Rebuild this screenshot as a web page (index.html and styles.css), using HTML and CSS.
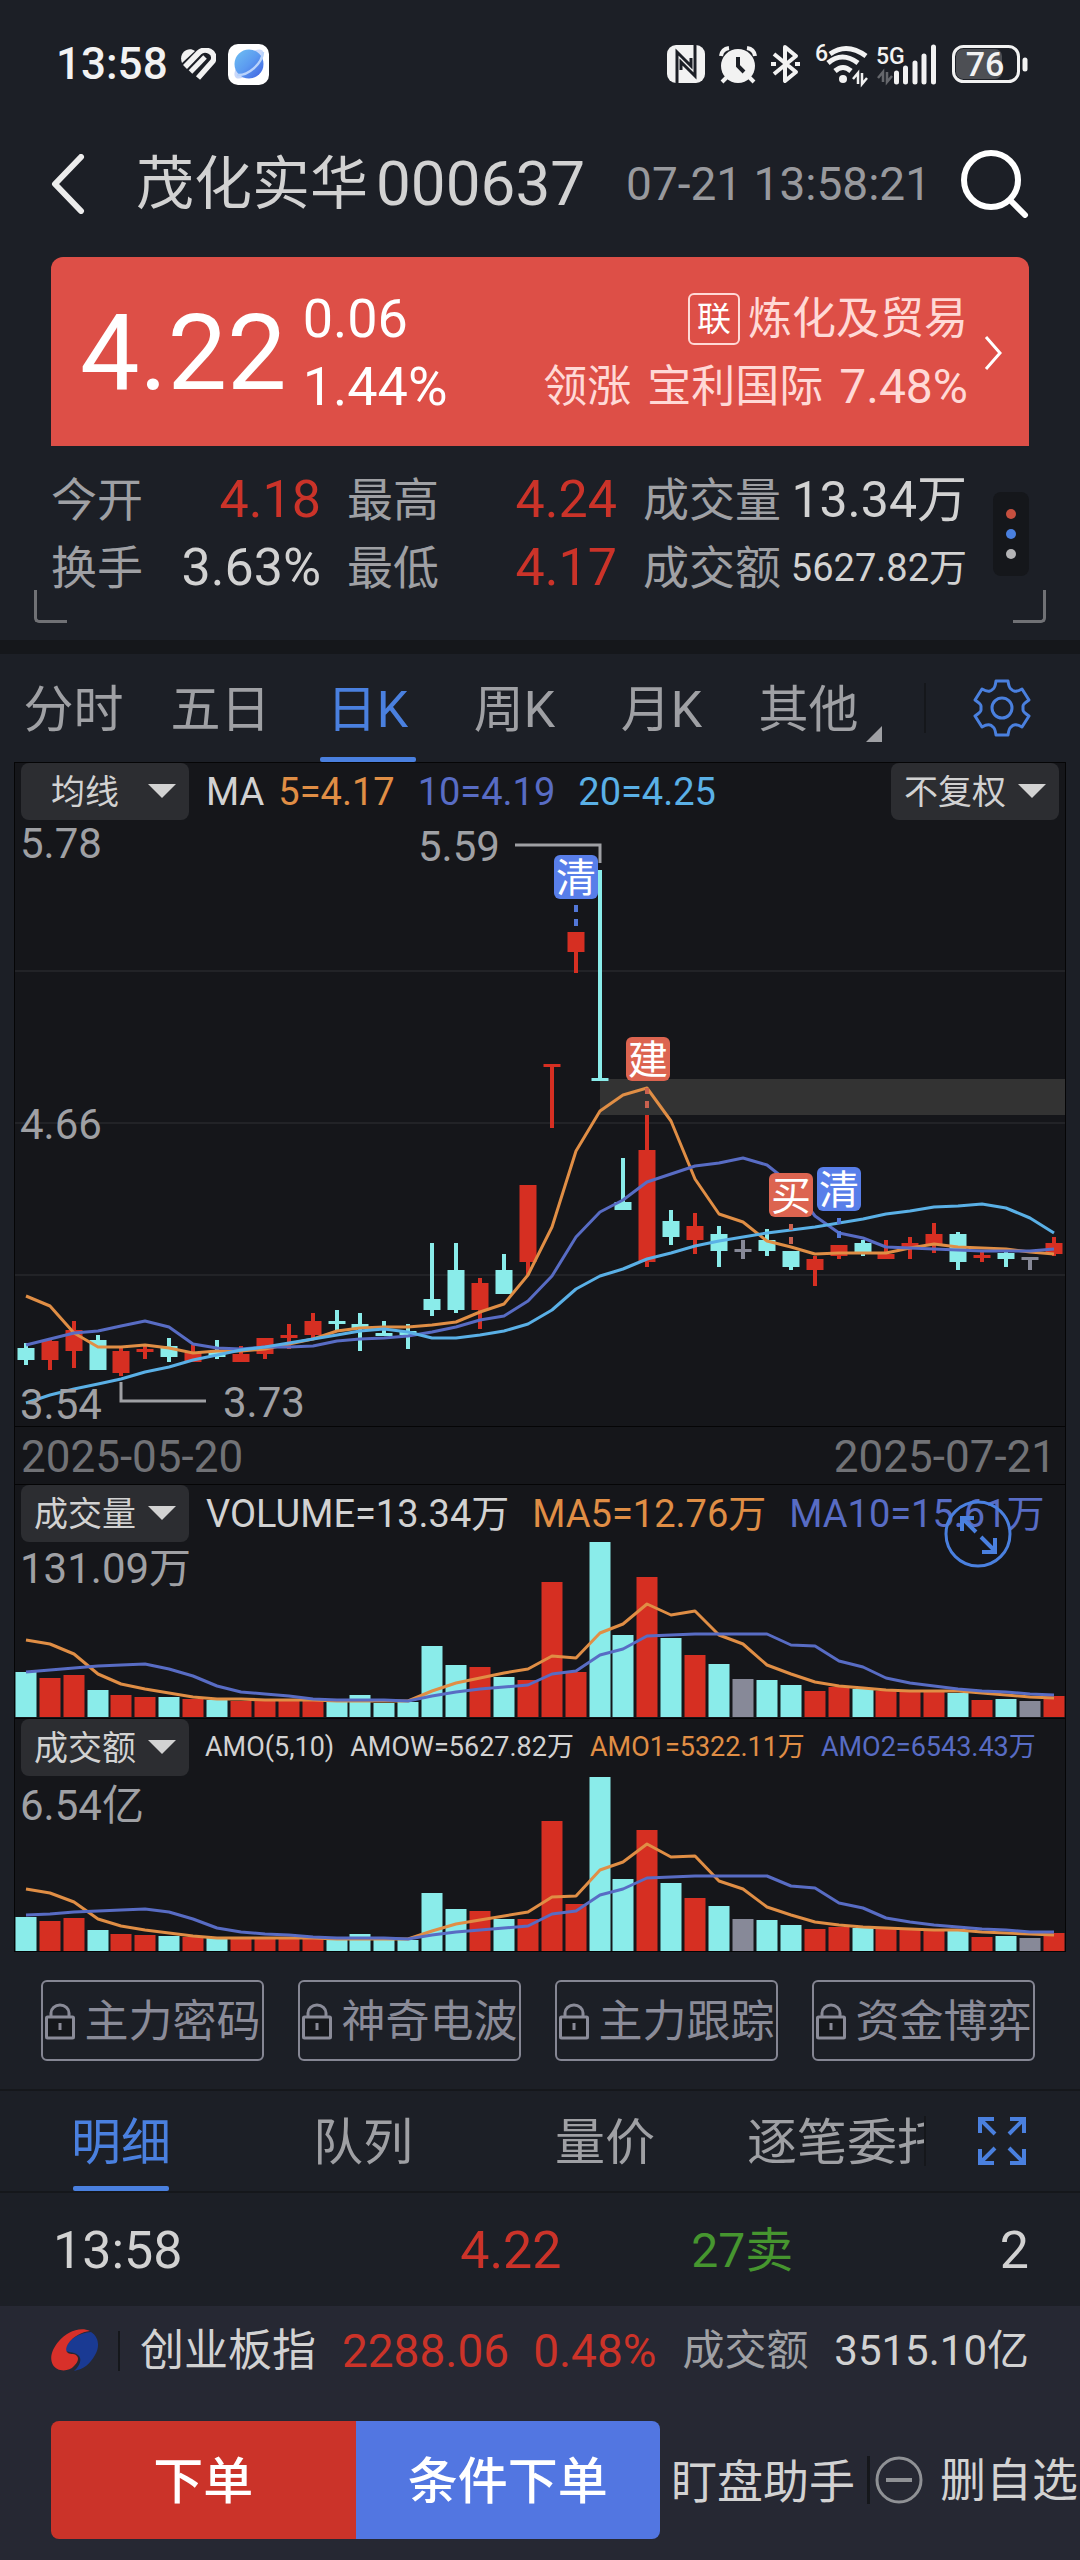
FILE: index.html
```html
<!DOCTYPE html>
<html lang="zh-CN">
<head>
<meta charset="utf-8">
<meta name="viewport" content="width=device-width, initial-scale=1">
<title>茂化实华 000637</title>
<link rel="stylesheet" href="styles.css">
</head>
<body>
<div class="status">
  <div class="status-side">
    <span class="status-time">13:58</span>
    <svg width="36" height="32" viewBox="0 0 36 32" fill="none" stroke="#f2f2f2" stroke-linecap="butt" aria-hidden="true">
      <path d="M2 15C-2 5 8-2 15 3z" fill="#f2f2f2" stroke="none"/>
      <path d="M5 19L19 4.500C25-1 37 4 33 13L18 30" stroke-width="5.500"/>
      <path d="M10.500 24L25 9" stroke-width="5"/>
    </svg>
    <svg width="41" height="41" viewBox="0 0 41 41" aria-hidden="true">
      <defs><linearGradient id="planet" x1="0" y1="0" x2="1" y2="1"><stop offset="0" stop-color="#6fc0f2"/><stop offset=".5" stop-color="#5b9af0"/><stop offset="1" stop-color="#3f5fe0"/></linearGradient></defs>
      <rect width="41" height="41" rx="10" fill="#fff"/>
      <ellipse cx="21" cy="20" rx="19" ry="8" transform="rotate(-45 21 20)" fill="#c9d8fa"/>
      <circle cx="21" cy="20" r="14.500" fill="url(#planet)"/>
      <path d="M9 31C20 32 34 20 35 8" fill="none" stroke="#b9d3fb" stroke-width="2.500"/>
    </svg>
  </div>
  <div class="status-side status-icons">
    <svg width="38" height="38" viewBox="0 0 38 38" aria-hidden="true"><rect width="38" height="38" rx="9" fill="#f2f2f2"/><path d="M10 38V7L24 21V13M28 0V31L14 17V25" fill="none" stroke="#1c1f26" stroke-width="3"/></svg>
    <svg width="38" height="38" viewBox="0 0 38 38" fill="none" stroke="#f2f2f2" aria-hidden="true"><circle cx="19" cy="21" r="17" fill="#f2f2f2" stroke="none"/><path d="M2 11Q3 4 10 3M28 3q7 1 8 8M8 32l-5 5M30 32l5 5" stroke-width="4"/><path d="M19 12v9l6 6" stroke="#1c1f26" stroke-width="4"/></svg>
    <svg width="30" height="38" viewBox="0 0 30 38" fill="none" stroke="#f2f2f2" stroke-width="4" stroke-linejoin="round" aria-hidden="true"><path d="M3 9l22 18-11 9V2l11 9L3 29M0 19h5M24 19h5"/></svg>
    <svg class="wifi" width="54" height="42" viewBox="0 0 54 42" fill="none" stroke="#f2f2f2" stroke-width="5" aria-hidden="true"><path d="M15 11q17-12 36 2M13 20q14-12 30 0M20 28q8-7 16 0"/><circle cx="28" cy="36" r="4" fill="#f2f2f2" stroke="none"/><path d="M43 41V30l-5 6M47 30v11l5-6" stroke-width="2.500"/><text class="tiny-text" x="0" y="18">6</text></svg>
    <svg width="62" height="40" viewBox="0 0 62 40" aria-hidden="true"><path d="M7 38V28l-5 6M11 28v10l5-6" fill="none" stroke="#65676c" stroke-width="2.500"/><path d="M20.500 38V29M29.500 38V24M39 38V19M48 38V12M57.500 38V3" stroke="#f2f2f2" stroke-width="5" stroke-linecap="round"/><text class="tiny-text" x="0" y="20">5G</text></svg>
    <svg width="76" height="38" viewBox="0 0 76 38" aria-hidden="true"><rect x="4" y="4" width="46" height="30" rx="7" fill="#4d4f54"/><rect x="1.500" y="1.500" width="65" height="35" rx="10" fill="none" stroke="#f2f2f2" stroke-width="3"/><path d="M73 15v9" stroke="#f2f2f2" stroke-width="5" stroke-linecap="round"/><text class="battery-text" x="33" y="31">76</text></svg>
  </div>
</div>

<header class="header">
  <button class="icon-button" type="button" aria-label="返回"><svg width="34" height="60" viewBox="0 0 34 60"><path d="M30 3L4 30l26 27" fill="none" stroke="#ececec" stroke-width="6" stroke-linecap="round" stroke-linejoin="round"/></svg></button>
  <h1 class="title"><span>茂化实华</span><span class="code">000637</span></h1>
  <time class="stamp">07-21 13:58:21</time>
  <button class="icon-button" type="button" aria-label="搜索"><svg width="68" height="68" viewBox="0 0 68 68"><circle cx="30" cy="30" r="27" fill="none" stroke="#fff" stroke-width="6"/><path d="M50 51l14 14" stroke="#fff" stroke-width="6" stroke-linecap="round"/></svg></button>
</header>

<main>
<section class="quote">
  <a class="price-card" href="#sector">
    <strong class="price">4.22</strong>
    <span class="change"><span>0.06</span><span>1.44%</span></span>
    <span class="sector">
      <span class="sector-line"><span class="badge">联</span>炼化及贸易</span>
      <span class="sector-line leader"><span>领涨</span><span>宝利国际</span><span class="leader-pct">7.48%</span></span>
    </span>
    <svg width="19" height="36" viewBox="0 0 19 36" aria-hidden="true"><path d="M2 2l14 16L2 34" fill="none" stroke="#fff" stroke-width="3"/></svg>
  </a>
  <div class="stats">
    <div class="stat"><span>今开</span><b class="up">4.18</b></div>
    <div class="stat"><span>最高</span><b class="up">4.24</b></div>
    <div class="stat"><span>成交量</span><b class="volume">13.34万</b></div>
    <button class="dots" type="button" aria-label="更多"><i></i><i></i><i></i></button>
    <div class="stat"><span>换手</span><b>3.63%</b></div>
    <div class="stat"><span>最低</span><b class="up">4.17</b></div>
    <div class="stat"><span>成交额</span><b class="small">5627.82万</b></div>
  </div>
</section>

<nav class="tabs period-tabs">
  <div class="tab-list">
    <button type="button">分时</button>
    <button type="button">五日</button>
    <button type="button" class="active">日K</button>
    <button type="button">周K</button>
    <button type="button">月K</button>
    <button type="button" class="more">其他</button>
  </div>
  <button class="tab-tool" type="button" aria-label="设置"><svg width="58" height="58" viewBox="-29 -29 58 58" fill="none" stroke="#4a80df" stroke-width="3" stroke-linejoin="round"><path d="M-9-19Q-7-20-6-27H6Q7-20 9-19Q11-17 12-17Q15-16 20-19L27-8Q21-4 21-2V2Q21 4 27 8L20 19Q15 16 12 17Q11 17 9 19Q7 20 6 27H-6Q-7 20-9 19Q-11 17-12 17Q-15 16-20 19L-27 8Q-21 4-21 2V-2Q-21-4-27-8L-20-19Q-15-16-12-17Q-11-17-9-19Z"/><circle r="10"/></svg></button>
</nav>

<section class="charts">
  <div class="panel">
    <div class="legend">
      <label class="picker"><select aria-label="主图指标"><option>均线</option></select></label>
      <div class="legend-group"><span>MA</span><span class="ma5">5=4.17</span></div>
      <span class="ma10">10=4.19</span>
      <span class="ma20">20=4.25</span>
      <label class="picker push"><select aria-label="复权"><option>不复权</option></select></label>
    </div>
    <svg class="chart" viewBox="15 820 1050 606" role="img" aria-label="日K线图">
      <path class="grid-line" d="M14 971H1066M14 1123H1066M14 1275H1066"/>
      <rect x="600" y="1079" width="466" height="36" fill="#333"/>
      <text class="axis" x="20" y="858">5.78</text>
      <text class="axis" x="20" y="1139">4.66</text>
      <g class="fall">
        <path class="wick" d="M26 1343V1365M98 1335V1370M169 1338V1362M217 1340V1359M337 1310V1331M360 1313V1351M384 1321V1336M408 1324V1349M432 1243V1316M456 1243V1313M504 1254V1294M600 870V1080M623 1158V1210M671 1210V1245M719 1226V1267M767 1229V1256M791 1251V1270M863 1240V1256M958 1232V1270M1006 1249V1267"/>
        <path class="body" d="M26 1348V1360M98 1340V1370M169 1346V1357M217 1351V1357M337 1321V1324M360 1324V1328M384 1333V1336M408 1331V1335M432 1299V1310M456 1270V1310M504 1270V1294M600 1078V1081M623 1202V1210M671 1221V1237M719 1234V1251M767 1240V1251M791 1251V1267M863 1243V1254M958 1234V1262M1006 1253V1259"/>
      </g>
      <g class="rise">
        <path class="wick" d="M50 1339V1370M74 1321V1368M121 1347V1376M145 1345V1359M193 1345V1362M241 1346V1362M265 1338V1359M289 1324V1349M313 1313V1338M480 1278V1329M528 1185V1275M552 1064V1128M576 932V973M647 1115V1267M695 1213V1254M815 1256V1286M839 1245V1259M886 1240V1259M910 1237V1259M934 1223V1253M982 1251V1262M1054 1237V1256"/>
        <path class="body" d="M50 1341V1360M74 1330V1351M121 1351V1373M145 1349V1352M193 1353V1362M241 1354V1362M265 1338V1354M289 1335V1338M313 1321V1335M480 1283V1310M528 1185V1262M552 1064V1067M576 932V952M647 1150V1262M695 1226V1240M815 1259V1270M839 1245V1256M886 1254V1259M910 1243V1249M934 1234V1245M982 1255V1258M1054 1243V1254"/>
      </g>
      <g class="flat">
        <path class="wick" d="M743 1240V1259M1030 1257V1270"/>
        <path class="body" d="M743 1249V1252M1030 1257V1260"/>
      </g>
      <polyline class="line ma5" points="26,1296 50,1306 74,1333 98,1347 121,1347 145,1345 169,1348 193,1353 217,1351 241,1351 265,1349 289,1344 313,1339 337,1331 360,1328 384,1327 408,1327 432,1325 456,1322 480,1312 504,1304 528,1275 552,1227 576,1151 600,1111 623,1095 647,1088 671,1121 695,1179 719,1214 743,1222 767,1241 791,1247 815,1254 839,1253 863,1253 886,1253 910,1248 934,1244 958,1247 982,1248 1006,1249 1030,1252 1054,1254"/>
      <polyline class="line ma10" points="26,1345 50,1339 74,1333 98,1331 121,1326 145,1321 169,1327 193,1344 217,1348 241,1349 265,1347 289,1347 313,1346 337,1341 360,1339 384,1338 408,1336 432,1332 456,1327 480,1320 504,1316 528,1301 552,1276 576,1237 600,1212 623,1200 647,1182 671,1174 695,1166 719,1163 743,1158 767,1165 791,1184 815,1216 839,1233 863,1238 886,1247 910,1248 934,1249 958,1250 982,1251 1006,1251 1030,1251 1054,1249"/>
      <polyline class="line ma20" points="26,1403 50,1395 74,1389 98,1384 121,1379 145,1372 169,1367 193,1360 217,1355 241,1350 265,1347 289,1343 313,1339 337,1335 360,1331 384,1329 408,1332 432,1338 456,1338 480,1335 504,1331 528,1324 552,1310 576,1289 600,1276 623,1269 647,1259 671,1253 695,1246 719,1241 743,1237 767,1233 791,1230 815,1227 839,1223 863,1219 886,1214 910,1211 934,1207 958,1206 982,1204 1006,1208 1030,1218 1054,1233"/>
      <text class="axis" x="20" y="1419">3.54</text>
      <path class="pointer" d="M515 845H600V863M121 1382V1401H206"/>
      <text class="axis" x="418" y="861">5.59</text>
      <text class="axis" x="223" y="1417">3.73</text>
      <path class="dash-sell" d="M576 905v7M576 919v7M839 1218v6M839 1231v7"/>
      <path class="dash-buy" d="M647 1088v6M647 1101v7M791 1224v6M791 1237v7"/>
      <rect class="sell" x="554" y="855" width="44" height="44" rx="6"/><text class="mark" x="576" y="892">清</text>
      <rect class="buy" x="626" y="1037" width="44" height="44" rx="6"/><text class="mark" x="648" y="1074">建</text>
      <rect class="buy" x="769" y="1173" width="44" height="44" rx="6"/><text class="mark" x="791" y="1210">买</text>
      <rect class="sell" x="817" y="1167" width="44" height="44" rx="6"/><text class="mark" x="839" y="1204">清</text>
    </svg>
    <div class="dates"><time>2025-05-20</time><time>2025-07-21</time></div>
  </div>

  <div class="panel">
    <div class="legend">
      <label class="picker"><select aria-label="副图指标一"><option>成交量</option></select></label>
      <span>VOLUME=13.34万</span>
      <span class="ma5">MA5=12.76万</span>
      <span class="ma10">MA10=15.61万</span>
    </div>
    <svg class="chart" viewBox="15 1542 1050 176" role="img" aria-label="成交量图">
      <text class="axis" x="20" y="1583">131.09万</text>
      <path class="bar fall" d="M26 1717V1672M98 1717V1690M169 1717V1697M217 1717V1700M337 1717V1702M360 1717V1695M384 1717V1703M408 1717V1702M432 1717V1646M456 1717V1665M504 1717V1677M600 1717V1542M623 1717V1635M671 1717V1638M719 1717V1664M767 1717V1680M791 1717V1685M863 1717V1689M958 1717V1693M1006 1717V1699"/>
      <path class="bar rise" d="M50 1717V1678M74 1717V1675M121 1717V1695M145 1717V1697M193 1717V1699M241 1717V1701M265 1717V1701M289 1717V1701M313 1717V1701M480 1717V1667M528 1717V1680M552 1717V1582M576 1717V1672M647 1717V1577M695 1717V1655M815 1717V1691M839 1717V1687M886 1717V1691M910 1717V1692M934 1717V1692M982 1717V1700M1054 1717V1696"/>
      <path class="bar flat" d="M743 1717V1679M1030 1717V1701"/>
      <polyline class="line ma5" points="26,1640 50,1644 74,1654 98,1674 121,1684 145,1689 169,1693 193,1697 217,1699 241,1699 265,1700 289,1700 313,1700 337,1701 360,1701 384,1701 408,1701 432,1691 456,1683 480,1678 504,1673 528,1669 552,1656 576,1658 600,1633 623,1624 647,1604 671,1615 695,1611 719,1635 743,1644 767,1665 791,1674 815,1682 839,1686 863,1688 886,1690 910,1691 934,1691 958,1691 982,1693 1006,1695 1030,1697 1054,1698"/>
      <polyline class="line ma10" points="26,1672 50,1670 74,1668 98,1666 121,1665 145,1664 169,1669 193,1676 217,1686 241,1692 265,1694 289,1696 313,1699 337,1700 360,1700 384,1700 408,1701 432,1696 456,1692 480,1689 504,1687 528,1685 552,1674 576,1671 600,1655 623,1649 647,1636 671,1635 695,1634 719,1634 743,1634 767,1634 791,1645 815,1646 839,1661 863,1667 886,1678 910,1683 934,1686 958,1689 982,1691 1006,1692 1030,1694 1054,1695"/>
    </svg>
    <button class="expand" type="button" aria-label="展开图表"><svg width="68" height="68" viewBox="0 0 68 68" fill="none" stroke="#4a80df" stroke-width="3"><circle cx="34" cy="34" r="32"/><path d="M18 31V18H30M18 18L32 32M37 37L51 51M51 38V52H38" stroke-width="4"/></svg></button>
  </div>

  <div class="panel">
    <div class="legend compact">
      <label class="picker"><select aria-label="副图指标二"><option>成交额</option></select></label>
      <span>AMO(5,10)</span>
      <span>AMOW=5627.82万</span>
      <span class="ma5">AMO1=5322.11万</span>
      <span class="ma10">AMO2=6543.43万</span>
    </div>
    <svg class="chart" viewBox="15 1776 1050 175" role="img" aria-label="成交额图">
      <text class="axis" x="20" y="1820">6.54亿</text>
      <path class="bar fall" d="M26 1951V1917M98 1951V1930M169 1951V1936M217 1951V1938M337 1951V1939M360 1951V1934M384 1951V1940M408 1951V1940M432 1951V1893M456 1951V1909M504 1951V1919M600 1951V1777M623 1951V1879M671 1951V1883M719 1951V1906M767 1951V1920M791 1951V1925M863 1951V1928M958 1951V1931M1006 1951V1936"/>
      <path class="bar rise" d="M50 1951V1921M74 1951V1918M121 1951V1934M145 1951V1935M193 1951V1937M241 1951V1938M265 1951V1939M289 1951V1939M313 1951V1939M480 1951V1911M528 1951V1919M552 1951V1821M576 1951V1904M647 1951V1830M695 1951V1898M815 1951V1929M839 1951V1927M886 1951V1929M910 1951V1930M934 1951V1930M982 1951V1937M1054 1951V1933"/>
      <path class="bar flat" d="M743 1951V1919M1030 1951V1938"/>
      <polyline class="line ma5" points="26,1889 50,1893 74,1902 98,1919 121,1926 145,1930 169,1933 193,1936 217,1938 241,1938 265,1938 289,1938 313,1938 337,1939 360,1939 384,1939 408,1939 432,1931 456,1924 480,1920 504,1916 528,1912 552,1897 576,1896 600,1870 623,1862 647,1844 671,1857 695,1856 719,1881 743,1889 767,1907 791,1915 815,1922 839,1925 863,1927 886,1928 910,1929 934,1930 958,1930 982,1932 1006,1933 1030,1934 1054,1935"/>
      <polyline class="line ma10" points="26,1915 50,1914 74,1912 98,1911 121,1910 145,1909 169,1912 193,1919 217,1928 241,1932 265,1934 289,1935 313,1937 337,1938 360,1938 384,1938 408,1939 432,1935 456,1932 480,1930 504,1928 528,1926 552,1914 576,1911 600,1895 623,1889 647,1878 671,1877 695,1876 719,1876 743,1876 767,1876 791,1886 815,1888 839,1903 863,1908 886,1918 910,1922 934,1925 958,1927 982,1929 1006,1930 1030,1932 1054,1932"/>
    </svg>
  </div>
</section>

<svg class="sprite" aria-hidden="true"><symbol id="lock" viewBox="0 0 30 37"><path d="M6 14V10a9 8 0 0 1 18 0v4" fill="none" stroke="#8a8b98" stroke-width="3"/><rect x="1.500" y="14" width="27" height="21" rx="1" fill="#15171b" stroke="#8a8b98" stroke-width="3"/><path d="M15 20v7" stroke="#8a8b98" stroke-width="3"/></symbol></svg>
<section class="locked">
  <button type="button"><svg width="30" height="37"><use href="#lock"/></svg>主力密码</button>
  <button type="button"><svg width="30" height="37"><use href="#lock"/></svg>神奇电波</button>
  <button type="button"><svg width="30" height="37"><use href="#lock"/></svg>主力跟踪</button>
  <button type="button"><svg width="30" height="37"><use href="#lock"/></svg>资金博弈</button>
</section>

<nav class="tabs detail-tabs">
  <div class="tab-list">
    <button type="button" class="active">明细</button>
    <button type="button">队列</button>
    <button type="button">量价</button>
    <button type="button">逐笔委托</button>
  </div>
  <button class="tab-tool" type="button" aria-label="全屏"><svg width="50" height="50" viewBox="0 0 50 50" fill="none" stroke="#4a80df" stroke-width="4"><path d="M3 17V3H17M3 3L18 18M33 3H47V17M47 3L32 18M3 33V47H17M3 47L18 32M33 47H47V33M47 47L32 32"/></svg></button>
</nav>

<table class="trades">
  <tbody><tr><td>13:58</td><td class="up">4.22</td><td class="down">27卖</td><td>2</td></tr></tbody>
</table>
</main>

<footer class="footer">
  <div class="index-row">
    <svg width="48" height="44" viewBox="0 0 48 44" aria-hidden="true"><path d="M40 3C48 8 49 18 44 26C39 35 33 40 23 42C30 36 31 29 27 26C22 22 16 24 14 21C17 10 28 4 40 3Z" fill="#1a3a93"/><path d="M39 2C28-3 15 4 8 12C1 20-2 29 2 36C6 43 18 43 23 37C29 31 28 26 22 25C16 25 13 22 17 15C22 7 31 3 39 2Z" fill="#d8302a"/></svg>
    <span class="rule"></span>
    <span class="index-name">创业板指</span>
    <span class="index-figures"><span>2288.06</span><span>0.48%</span></span>
    <span class="index-label">成交额</span>
    <span class="index-amount">3515.10亿</span>
  </div>
  <div class="actions">
    <div class="orders"><button type="button" class="order">下单</button><button type="button" class="order conditional">条件下单</button></div>
    <button type="button" class="link">盯盘助手</button>
    <button type="button" class="link remove"><svg width="48" height="48" viewBox="0 0 48 48" fill="none" stroke="#8f9195" stroke-width="3" aria-hidden="true"><circle cx="24" cy="24" r="22"/><path d="M11 24h26" stroke-width="4"/></svg>删自选</button>
  </div>
</footer>
</body>
</html>
```
FILE: styles.css
```css
* { box-sizing: border-box; }

body {
  margin: 0;
  background: #1c1f26;
  color: #d2d2d2;
  font-family: Roboto, "Noto Sans CJK SC", sans-serif;
  font-size: 44px;
  line-height: 1;
  overflow-x: hidden;
}

button, select {
  margin: 0;
  padding: 0;
  border: 0;
  background: none;
  color: inherit;
  font: inherit;
  white-space: nowrap;
}

svg { display: block; flex: none; }
.sprite { width: 0; height: 0; position: absolute; }
.up { color: #cb3329; }
.down { color: #46962f; }

/* system status bar */
.status {
  display: flex;
  justify-content: space-between;
  align-items: center;
  min-height: 128px;
  padding: 0 52px 0 56px;
}
.status-side { display: flex; align-items: center; gap: 12px; }
.status-icons { gap: 14px; }
.status-icons svg { overflow: visible; }
.wifi { margin-right: -7px; }
.status-time { color: #f2f2f2; font-weight: 500; }
.tiny-text { fill: #f2f2f2; stroke: none; font-size: 23px; font-weight: 500; }
.battery-text { fill: #f2f2f2; font-size: 34px; font-weight: 500; text-anchor: middle; }

/* title bar */
.header {
  display: flex;
  align-items: center;
  min-height: 112px;
  padding: 0 51px;
}
.title {
  display: flex;
  align-items: center;
  gap: 8px;
  margin: 0 auto 0 51px;
  font-size: 58px;
  font-weight: 400;
}
.code { font-size: 62px; }
.stamp { margin-right: 30px; color: #98999d; font-size: 46px; }

/* quote */
.quote {
  position: relative;
  padding: 17px 51px 38px;
  border-bottom: 14px solid #15171b;
}
.quote::before, .quote::after {
  content: "";
  position: absolute;
  bottom: 17px;
  width: 30px;
  height: 30px;
  border: 3px solid #707175;
  border-top: 0;
}
.quote::before { left: 34px; border-right: 0; border-bottom-left-radius: 5px; }
.quote::after { right: 34px; border-left: 0; border-bottom-right-radius: 5px; }
.price-card {
  display: flex;
  align-items: center;
  padding: 28px 26px 25px 29px;
  border-radius: 12px 12px 0 0;
  background: #dd4f47;
  color: #fff;
  text-decoration: none;
}
.price { font-size: 106px; font-weight: 400; }
.change {
  display: flex;
  flex-direction: column;
  margin-left: 16px;
  font-size: 54px;
  line-height: 68px;
}
.sector {
  display: flex;
  flex-direction: column;
  align-items: flex-end;
  margin: 0 16px 0 auto;
  color: #ffd9d6;
  font-size: 44px;
}
.sector-line { display: flex; align-items: center; gap: 8px; height: 68px; }
.leader { gap: 16px; }
.leader-pct { font-size: 48px; }
.badge {
  padding: 7px;
  border: 2px solid #ffd9d6;
  border-radius: 6px;
  color: #fff;
  font-size: 34px;
}
.stats {
  display: grid;
  grid-template-columns: 5fr 5fr 6fr 36px;
  column-gap: 26px;
  padding-top: 20px;
}
.stat {
  display: flex;
  justify-content: space-between;
  align-items: center;
  min-width: 0;
  height: 68px;
  color: #9fa0a4;
  font-size: 46px;
  white-space: nowrap;
}
.stat b { color: #d2d2d2; font-size: 52px; font-weight: 400; }
.stat b.up { color: #cb3329; }
.stat b.volume { font-size: 50px; }
.stat b.small { font-size: 38px; }
.dots {
  grid-column: 4;
  grid-row: 1 / 3;
  align-self: center;
  display: flex;
  flex-direction: column;
  align-items: center;
  gap: 10px;
  padding: 17px 0;
  border-radius: 8px;
  background: #15171b;
}
.dots i { width: 10px; height: 10px; border-radius: 50%; background: #b4b4b6; }
.dots i:nth-child(1) { background: #c6503f; }
.dots i:nth-child(2) { background: #4a80df; }

/* tabs */
.tabs { display: flex; align-items: stretch; color: #9fa0a4; font-size: 50px; }
.tab-list { display: flex; flex: 1; min-width: 0; }
.tab-list button {
  flex: 1 1 0;
  display: flex;
  justify-content: center;
  align-items: center;
  position: relative;
  min-width: 0;
  padding-top: 3px;
}
.tab-list .active { color: #4a80df; }
.tab-list .active::after {
  content: "";
  position: absolute;
  bottom: 0;
  left: calc(50% - 48px);
  width: 96px;
  height: 5px;
  border-radius: 2px;
  background: #4a80df;
}
.tab-tool {
  display: flex;
  align-items: center;
  justify-content: center;
  width: 156px;
  position: relative;
}
.tab-tool::before {
  content: "";
  position: absolute;
  left: 0;
  width: 2px;
  height: 50px;
  background: #15171b;
}
.period-tabs { height: 108px; }
.period-tabs .tab-list { padding-right: 42px; }
.more::after {
  content: "";
  position: absolute;
  right: 0;
  bottom: 20px;
  border-left: 16px solid transparent;
  border-bottom: 16px solid #9fa0a4;
}
.detail-tabs {
  height: 104px;
  border-top: 2px solid #15171b;
  border-bottom: 2px solid #15171b;
}
.detail-tabs .tab-list { overflow: hidden; }
.detail-tabs .tab-list button { flex: 0 0 242px; }

/* charts */
.charts { padding: 0 14px; }
.panel {
  position: relative;
  border: 1px solid #050506;
  border-bottom: 0;
  background: #15161a;
}
.panel:last-child { border-bottom: 1px solid #050506; }
.legend {
  display: flex;
  align-items: center;
  gap: 23px;
  padding: 0 6px;
  font-size: 38px;
  white-space: nowrap;
}
.legend > .picker + * { margin-left: -6px; }
.legend-group { display: flex; gap: 14px; }
.compact { gap: 16px; font-size: 27px; }
.compact > .picker + * { margin-left: 0; }
.legend .push { margin-left: auto; }
.picker { position: relative; width: 168px; font-size: 34px; }
.picker select {
  appearance: none;
  display: block;
  width: 100%;
  height: 57px;
  padding: 0 48px 0 8px;
  border-radius: 8px;
  background: #2c2d31;
  text-align: center;
  text-align-last: center;
}
.picker::after {
  content: "";
  position: absolute;
  right: 13px;
  top: 21px;
  border: 14px solid transparent;
  border-top-color: #d2d2d2;
  border-bottom: 0;
  pointer-events: none;
}
.chart { width: 100%; height: auto; }
.dates {
  display: flex;
  justify-content: space-between;
  align-items: center;
  height: 58px;
  padding: 3px 9px 0 6px;
  border-top: 1px solid #050506;
  color: #717276;
  font-size: 44px;
}
.expand { position: absolute; right: 53px; top: 15px; }

.axis { fill: #9fa0a4; font-size: 42px; }
.grid-line { stroke: #222327; stroke-width: 2; }
.wick { stroke-width: 4; }
.body { stroke-width: 17; }
.bar { stroke-width: 21; }
.fall { stroke: #8aecea; }
.rise { stroke: #d62f22; }
.flat { stroke: #878998; }
.line { fill: none; stroke-width: 3; stroke-linejoin: round; }
.ma5 { color: #e08e45; stroke: #e08e45; }
.ma10 { color: #586cc4; stroke: #586cc4; }
.ma20 { color: #5ab0e6; stroke: #5ab0e6; }
.pointer { fill: none; stroke: #9fa0a4; stroke-width: 3; }
.dash-sell { stroke: #5277d8; stroke-width: 4; }
.dash-buy { stroke: #c9614f; stroke-width: 4; }
.sell { fill: #587ee9; }
.buy { fill: #dc6450; }
.mark { fill: #fff; font-size: 40px; text-anchor: middle; }

/* locked indicators */
.locked {
  display: grid;
  grid-template-columns: repeat(4, 1fr);
  gap: 34px;
  padding: 28px 45px 28px 41px;
}
.locked button {
  display: flex;
  align-items: center;
  justify-content: center;
  gap: 10px;
  height: 81px;
  padding-top: 2px;
  border: 2px solid #858693;
  border-radius: 6px;
  color: #8a8b98;
  font-size: 44px;
}

/* trade list */
.trades {
  width: 100%;
  border-collapse: collapse;
  table-layout: fixed;
  font-size: 52px;
}
.trades td { height: 113px; padding: 2px 0 0; text-align: right; }
.trades td:nth-child(1) { width: 28%; padding-left: 53px; text-align: left; }
.trades td:nth-child(2) { width: 24%; }
.trades td:nth-child(3) { width: 22%; padding-right: 6px; font-size: 48px; }
.trades td:nth-child(4) { padding-right: 51px; }

/* footer */
.footer { padding: 0 0 21px 51px; background: #262833; }
.index-row {
  display: flex;
  align-items: center;
  height: 90px;
  padding-right: 51px;
  white-space: nowrap;
}
.rule { width: 2px; height: 40px; margin: 0 20px 0 19px; background: #15171b; }
.index-name { font-size: 44px; }
.index-figures { display: flex; gap: 24px; margin: 0 auto; color: #cb3329; font-size: 46px; }
.index-label { margin-right: auto; color: #9fa0a4; font-size: 42px; }
.index-amount { font-size: 42px; }
.actions { display: flex; align-items: center; padding-top: 25px; }
.orders {
  display: flex;
  flex: 1;
  height: 118px;
  border-radius: 8px;
  overflow: hidden;
  color: #fff;
  font-size: 50px;
  font-weight: 500;
}
.order { flex: 1; padding-top: 3px; background: #cb3329; }
.conditional { background: #5276e1; }
.link { padding: 3px 12px 0 11px; font-size: 46px; }
.remove {
  display: flex;
  align-items: center;
  gap: 17px;
  padding: 0 2px 0 5px;
  border-left: 3px solid #15171b;
}
```
